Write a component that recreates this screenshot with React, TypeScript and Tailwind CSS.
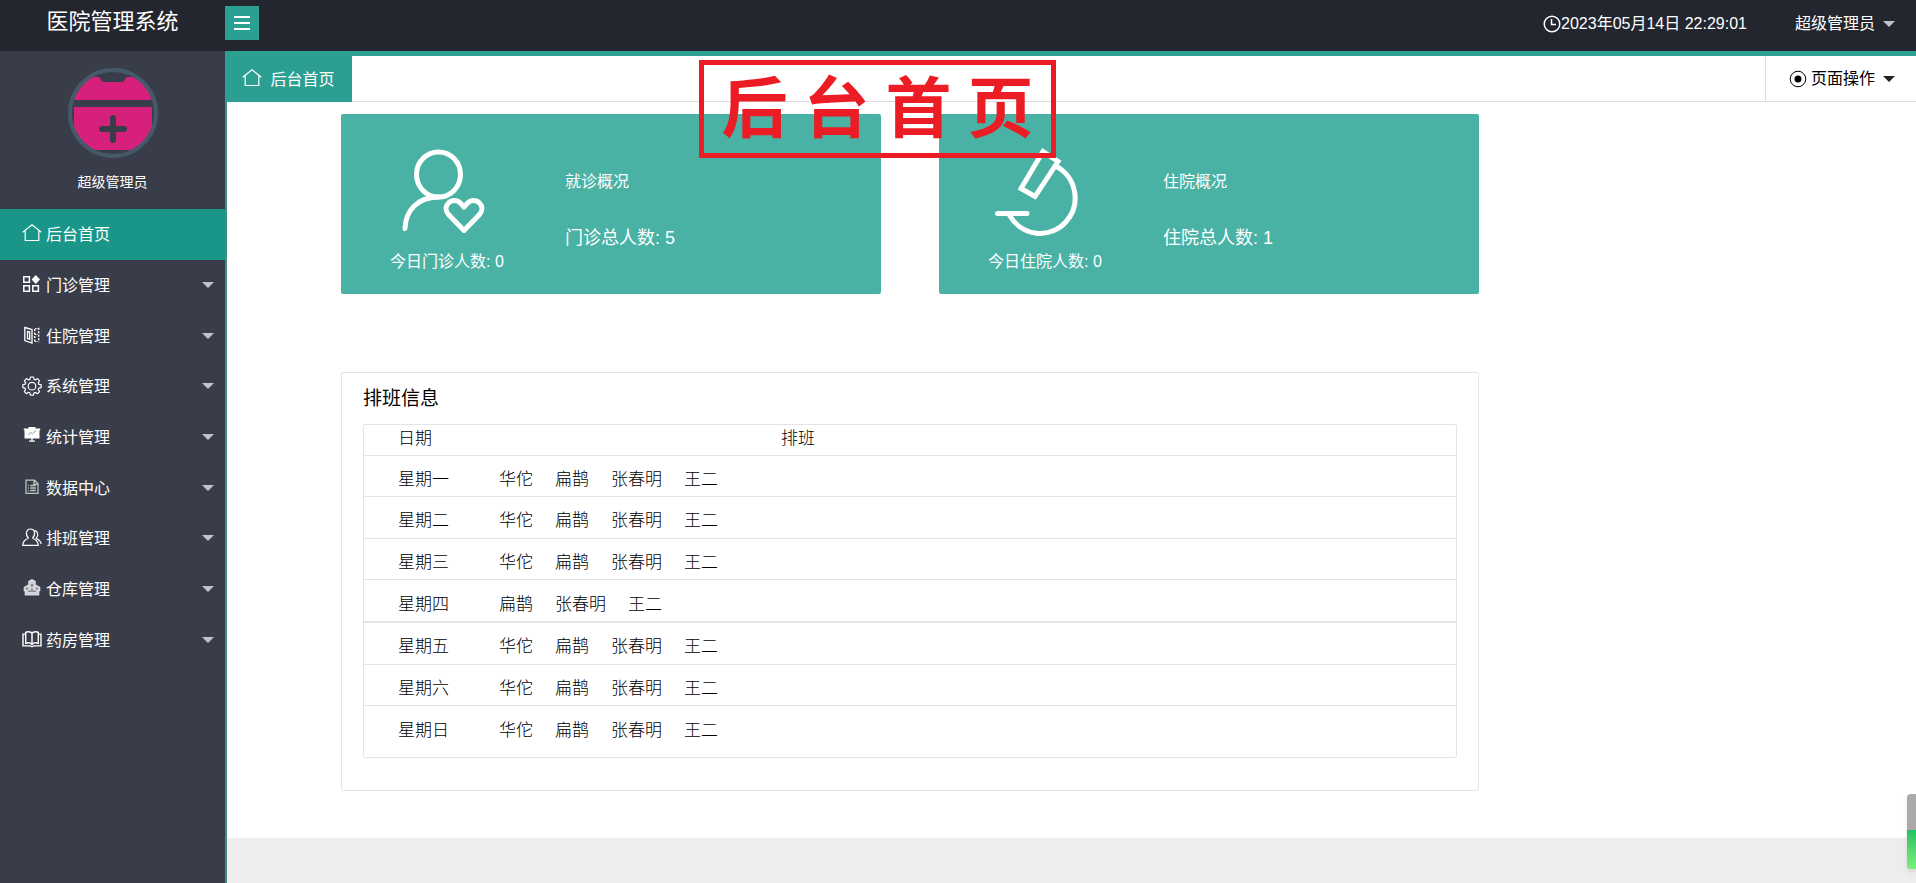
import type { ReactNode } from "react";

const iconProps = {
  width: 20,
  height: 20,
  viewBox: "0 0 20 20",
  fill: "none",
  stroke: "currentColor",
  strokeWidth: 1.2,
  "aria-hidden": true,
} as const;

function HomeIcon() {
  return (
    <svg {...iconProps}>
      <path d="M.7 8.2 10 .8l9.300 7.400M3.200 6.600v9.900h13.600V6.600" />
    </svg>
  );
}

function AppsIcon() {
  return (
    <svg {...iconProps} strokeWidth="1.500">
      <path d="M1.800 1.700h5.600v5.600H1.800zM1.800 10.700h5.600v5.600H1.800zM10.800 10.700h5.600v5.600h-5.600z" />
      <path d="m13.800 0 4.200 4.500L13.800 9 9.600 4.500z" fill="currentColor" stroke="none" />
    </svg>
  );
}

function WardIcon() {
  return (
    <svg {...iconProps}>
      <path d="M2.800 1.500 10 3.500v13.500L2.800 14.500zM5.500 5.500l2.200.6v7l-2.200-.7z" strokeWidth="1.300" />
      <path d="M12.700 3v12.600M16.700 1.800v14.400" strokeDasharray="2 1.500" strokeWidth="1.400" />
      <path d="M13 2.700h3M13 8.500h3M13 15.500h3" strokeDasharray="1.500 1" />
    </svg>
  );
}

function GearIcon() {
  return (
    <svg {...iconProps} strokeLinejoin="round">
      <path d="M8.400 1h3.200l.5 2.400 1.300.6 2.100-1.400 2.100 2.200-1.300 2.100.5 1.400 2.400.5v2.800l-2.400.6-.6 1.300 1.400 2.100-2.200 2.100-2-1.300-1.400.5-.5 2.300H8.400l-.5-2.300-1.400-.6-2.100 1.400-2.100-2.200 1.300-2-.6-1.400-2.200-.5V8.800l2.300-.6.6-1.300-1.400-2.100 2.200-2.200 2.100 1.400 1.300-.6z" />
      <circle cx="10" cy="10.200" r="3.800" />
    </svg>
  );
}

function BoardIcon() {
  return (
    <svg {...iconProps}>
      <path d="M6.500 0h7v1.500h4.700v1.700h-.7v8.300h-15V3.200h-.7V1.500h4.700z" fill="currentColor" stroke="none" />
      <path d="M6 7.800 9 5.500l1.500 1.300L14 3.700" stroke="#8a8d95" strokeWidth=".9" />
      <path d="M10 11v3M7 14.200h6" strokeWidth="1.300" />
    </svg>
  );
}

function FileIcon() {
  return (
    <svg {...iconProps} stroke="#b9c5bd" strokeWidth="1.300">
      <path d="M4 2.200h8.500L16 5.700v9.600H4zM12 2.500v3.700h4M6.200 7.500h.8M8.200 7.500h5.600M6.200 10h.8M8.200 10h5.600M6.200 12.500h.8M8.200 12.500h5.600" />
    </svg>
  );
}

function UsersIcon() {
  return (
    <svg {...iconProps}>
      <path d="M6.600 10.300C2.700 11.500.9 13.600.8 17.300h15.400c-.1-3.700-1.900-5.800-5.800-7M6.600 10.300C3 7 4 1 8.500 1s5.500 6 1.900 9.300M12.500 2.400c3.600.9 4.300 5.300 1.700 8 3 1.400 4.600 3.100 4.900 5.600" />
    </svg>
  );
}

function StoreIcon() {
  return (
    <svg {...iconProps} stroke="none" fill="#d4d6da">
      <path d="m10 0 3.800 2v3.600L18.300 8v4.200l-1 .4v4H2.700v-4l-1-.4V8l4.500-2.400V2z" />
      <path d="m10 4.200 2 2-2 1.700-2-1.700zM5 8l1.600 1.500L5 11 3.400 9.500zM15 8l1.600 1.500L15 11l-1.600-1.500zM9 9.500h2v2h3V13H6v-1.500h3z" fill="#8d9099" />
    </svg>
  );
}

function BookIcon() {
  return (
    <svg {...iconProps} strokeWidth="1.400">
      <path d="M10 3.300C8.500 1.500 5.300 1.300 3.700 2.300v11c2-.8 4.800-.6 6.300 1 1.500-1.600 4.300-1.800 6.300-1v-11C14.700 1.300 11.500 1.500 10 3.300zM10 3.300v11M3.700 4.100H1v11.800h7.600c.5.900 2.300.9 2.800 0H19V4.100h-2.700" />
    </svg>
  );
}

function Caret({ className }: { className: string }) {
  return (
    <svg width="12" height="6" viewBox="0 0 12 6" className={className} fill="currentColor" aria-hidden="true">
      <path d="M0 0h12L6 6z" />
    </svg>
  );
}

function PatientIcon() {
  return (
    <svg width="100" height="88" viewBox="0 0 100 88" fill="none" stroke="currentColor" strokeWidth="5" strokeLinecap="round" strokeLinejoin="round" aria-hidden="true">
      <ellipse cx="41.500" cy="26.500" rx="22" ry="22.500" />
      <path d="M8 80.500C8.500 62 21 49.500 41 49" />
      <path d="M67 82.500 51.500 66.500c-3.500-4-3-8.500 0-11.500 3.500-3.500 9-3 12 .2l3.500 4 3.500-4c3-3.200 8.500-3.700 12-.2 3 3 3.500 7.500 0 11.500z" />
    </svg>
  );
}

function MicroscopeIcon() {
  return (
    <svg width="100" height="88" viewBox="0 0 100 88" fill="none" stroke="currentColor" strokeWidth="5" strokeLinecap="round" aria-hidden="true">
      <path d="M48 3.500 63 13.500 40 48.500 26 40.500z" />
      <path d="M60.500 18A35 35.500 0 1 1 15 68M2.500 65.500H32" />
    </svg>
  );
}

function Avatar() {
  return (
    <svg width="90" height="90" viewBox="0 0 90 90" role="img" aria-label="头像">
      <clipPath id="avatar-clip">
        <circle cx="45" cy="45" r="42" />
      </clipPath>
      <g clipPath="url(#avatar-clip)">
        <path d="M6 32V9h24c3 0 3 5 6 5h18c3 0 3-5 6-5h24v23zM6 39h78v43H6z" fill="#d6207c" />
        <path d="M45 50v22M34 61h22" stroke="#393d49" strokeWidth="6" strokeLinecap="round" />
      </g>
      <circle cx="45" cy="45" r="43" fill="none" stroke="#455969" strokeWidth="4" />
    </svg>
  );
}

const menu = [
  { label: "后台首页", icon: <HomeIcon />, active: true },
  { label: "门诊管理", icon: <AppsIcon /> },
  { label: "住院管理", icon: <WardIcon /> },
  { label: "系统管理", icon: <GearIcon /> },
  { label: "统计管理", icon: <BoardIcon /> },
  { label: "数据中心", icon: <FileIcon /> },
  { label: "排班管理", icon: <UsersIcon /> },
  { label: "仓库管理", icon: <StoreIcon /> },
  { label: "药房管理", icon: <BookIcon /> },
];

const everyone = ["华佗", "扁鹊", "张春明", "王二"];

const schedule = [
  { day: "星期一", doctors: everyone },
  { day: "星期二", doctors: everyone },
  { day: "星期三", doctors: everyone },
  { day: "星期四", doctors: ["扁鹊", "张春明", "王二"] },
  { day: "星期五", doctors: everyone },
  { day: "星期六", doctors: everyone },
  { day: "星期日", doctors: everyone },
];

function StatCard({ icon, today, title, total }: { icon: ReactNode; today: string; title: string; total: string }) {
  return (
    <section className="flex h-[180px] gap-3 rounded-xs bg-[#49b2a5] text-white">
      <div className="flex w-[212px] flex-col items-center pt-[34px]">
        {icon}
        <p className="mt-3.5 text-base leading-6">{today}</p>
      </div>
      <div className="pt-14">
        <h2 className="text-base leading-6">{title}</h2>
        <p className="mt-8 text-lg leading-6">{total}</p>
      </div>
    </section>
  );
}

export default function App() {
  return (
    <div className="relative flex min-h-screen flex-col overflow-hidden bg-white font-['Liberation_Sans','Noto_Sans_CJK_SC',sans-serif] text-base">
      <header className="flex h-[51px] items-start bg-[#23262e] text-white">
        <h1 className="w-[225px] shrink-0 pt-1 text-center text-[22px] leading-9">医院管理系统</h1>
        <button type="button" aria-label="收起菜单" className="mt-1.5 flex size-[34px] items-center justify-center bg-[#2a9f92]">
          <svg width="16" height="14" viewBox="0 0 16 14" stroke="currentColor" strokeWidth="2" aria-hidden="true">
            <path d="M0 1h16M0 7h16M0 13h16" />
          </svg>
        </button>
        <div className="ml-auto flex h-12 items-center pr-[21px]">
          <svg width="18" height="18" viewBox="0 0 18 18" fill="none" stroke="currentColor" strokeWidth="1.500" aria-hidden="true">
            <circle cx="9" cy="9" r="7.800" />
            <path d="M8.500 4v5.500H13" />
          </svg>
          <time className="mr-12">2023年05月14日 22:29:01</time>
          <button type="button" className="flex items-center gap-2">
            超级管理员
            <Caret className="text-[#c2c2c9]" />
          </button>
        </div>
      </header>

      <div className="flex grow">
        <aside className="w-[227px] shrink-0 border-r-2 border-[#3f8d85] bg-[#393d49] text-white">
          <div className="flex h-[158px] flex-col items-center pt-[17px]">
            <Avatar />
            <p className="mt-3 text-sm leading-6">超级管理员</p>
          </div>
          <nav className="grid h-[456px] grid-rows-9">
            {menu.map((item) => (
              <a
                key={item.label}
                href="#"
                className={
                  item.active
                    ? "flex items-center gap-1 bg-[#1a9688] pl-[22px] pr-[11px]"
                    : "flex items-center gap-1 pl-[22px] pr-[11px]"
                }
              >
                {item.icon}
                <span className="pt-0.5">{item.label}</span>
                {!item.active && <Caret className="ml-auto text-[#c2c4cc]" />}
              </a>
            ))}
          </nav>
        </aside>

        <main className="flex min-w-0 grow flex-col">
          <div className="-ml-0.5 flex h-[51px] items-stretch border-t-5 border-[#2a9f92] bg-[#2a9f92]">
            <button type="button" className="flex w-[127px] items-center justify-center gap-2 text-white">
              <HomeIcon />
              <span className="pt-0.5">后台首页</span>
            </button>
            <div className="flex grow justify-end border-b border-[#dcdcdc] bg-white">
              <button type="button" className="flex items-center border-l border-[#dcdcdc] pl-[23px] pr-[21px] text-black">
                <svg width="18" height="18" viewBox="0 0 18 18" fill="none" stroke="currentColor" aria-hidden="true">
                  <circle cx="9" cy="9" r="7.800" />
                  <circle cx="9" cy="9" r="3.500" fill="currentColor" stroke="none" />
                </svg>
                <span className="ml-1">页面操作</span>
                <Caret className="ml-2 text-[#222]" />
              </button>
            </div>
          </div>

          <div className="ml-[114px] mt-3 grow">
            <div className="grid max-w-[1138px] grid-cols-2 gap-[58px]">
              <StatCard icon={<PatientIcon />} today="今日门诊人数: 0" title="就诊概况" total="门诊总人数: 5" />
              <StatCard icon={<MicroscopeIcon />} today="今日住院人数: 0" title="住院概况" total="住院总人数: 1" />
            </div>

            <section className="mt-[78px] max-w-[1138px] rounded-xs border border-[#e4e4e4] px-[21px] pb-8">
              <h2 className="h-[51px] pt-3.5 text-[19px] leading-6 text-black">排班信息</h2>
              <div className="rounded-xs border border-[#e4e4e4] pb-2.5">
                <table className="h-[322px] w-full text-left text-[17px] leading-6 text-black">
                  <thead>
                    <tr className="h-[30px] border-b border-[#e4e4e4]">
                      <th className="w-[135px] pb-0.5 pl-[34px] font-light">日期</th>
                      <th className="pb-0.5 pl-[282px] font-light">排班</th>
                    </tr>
                  </thead>
                  <tbody>
                    {schedule.map((row) => (
                      <tr
                        key={row.day}
                        className={row.day === "星期四" ? "border-b-2 border-[#e4e4e4]" : "border-b border-[#e4e4e4] last:border-b-0"}
                      >
                        <td className="pl-[34px] pt-2 font-light">{row.day}</td>
                        <td className="pt-2 font-light">
                          <div className="flex gap-[22px]">
                            {row.doctors.map((name) => (
                              <span key={name}>{name}</span>
                            ))}
                          </div>
                        </td>
                      </tr>
                    ))}
                  </tbody>
                </table>
              </div>
            </section>
          </div>

          <footer className="h-[45px] bg-[#ededed]" />
        </main>
      </div>

      {/* page label over the tab bar and cards */}
      <div className="absolute left-[699px] top-[60px] flex h-[98px] w-[357px] items-center justify-center gap-4 border-5 border-[#eb1c24] pb-3 font-['KaiTi','Noto_Sans_CJK_SC',sans-serif] text-[66px] font-bold leading-none text-[#eb1c24]">
        {["后", "台", "首", "页"].map((char) => (
          <span key={char}>{char}</span>
        ))}
      </div>

      {/* floating meter on the right edge */}
      <div className="absolute bottom-3.5 right-0 flex h-[75px] w-[9px] flex-col overflow-hidden rounded-l-sm bg-[#aaa] shadow-md">
        <div className="mt-auto h-[39px] bg-linear-to-b from-[#22c065] to-[#7af07c]" />
      </div>
    </div>
  );
}
